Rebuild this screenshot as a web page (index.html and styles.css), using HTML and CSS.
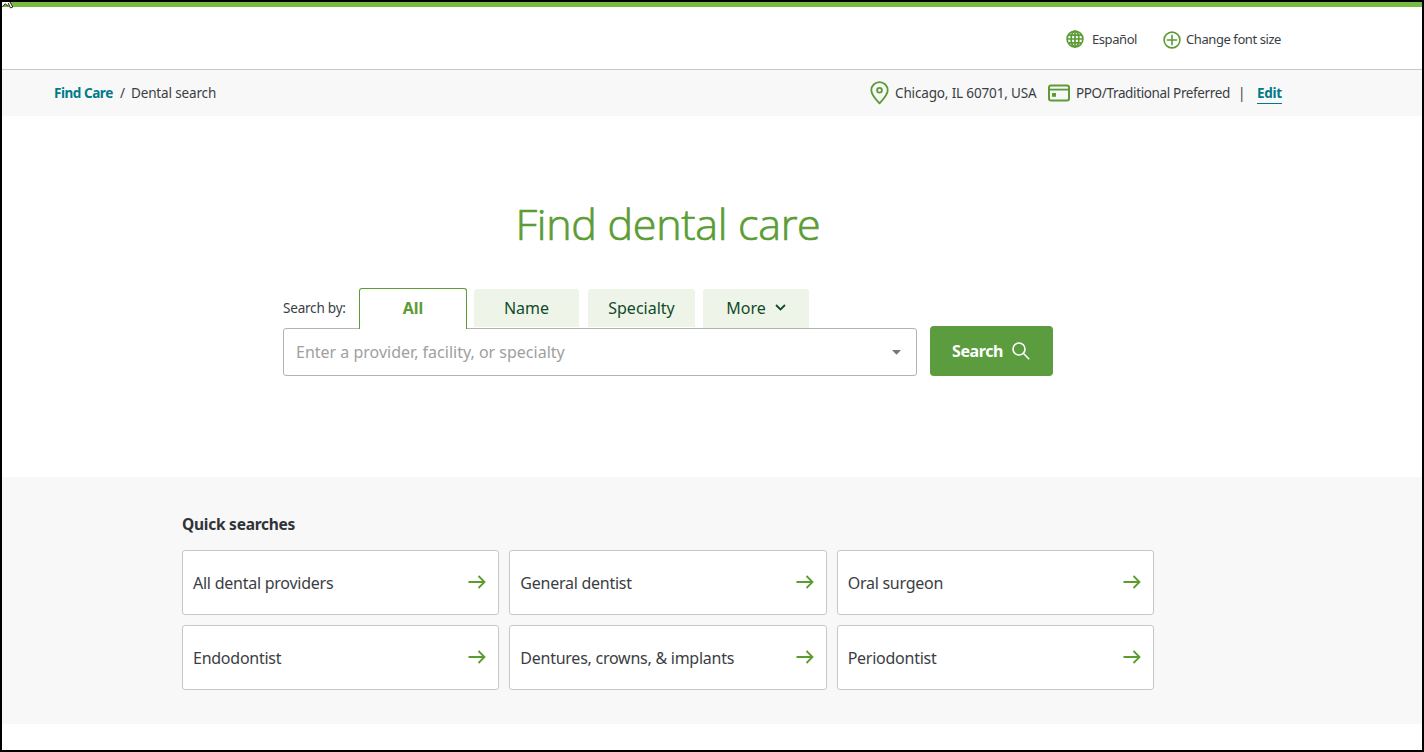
FILE: index.html
```html
<!DOCTYPE html>
<html lang="en">
<head>
<meta charset="utf-8">
<title>Find dental care</title>
<link rel="stylesheet" href="styles.css">
</head>
<body>
<div class="page">
  <svg class="cursor" width="12" height="7" viewBox="0 0 12 7"><path d="M0 0H7.5L11 5 8.5 6.5 6.3 2.5 4.5 3 3 1.5 0 4.5Z" fill="#fff"/><path d="M0.5 4.5 3.5 1.8 6 4.5M6.2 1 8.5 6 10.8 5 8 0" fill="none" stroke="#222" stroke-width="1"/></svg>
  <header class="topbar">
    <div class="container utilities">
      <a class="utility language">
        <svg width="18" height="18" viewBox="0 0 18 18" fill="none" stroke="#5b9c35" stroke-width="1.7"><circle cx="9" cy="9" r="7.9"/><path d="M9 1v16M1 9h16M2.5 5.2h13M2.5 12.8h13"/><ellipse cx="9" cy="9" rx="3.9" ry="7.8"/></svg>
        <span>Español</span>
      </a>
      <a class="utility fontsize">
        <svg width="18" height="18" viewBox="0 0 18 18" fill="none" stroke="#5b9c35" stroke-width="1.6"><circle cx="9" cy="9" r="7.9"/><path d="M9 4.3v9.4M4.3 9h9.4" stroke-linecap="round"/></svg>
        <span>Change font size</span>
      </a>
    </div>
  </header>
  <div class="contextbar">
    <div class="container context">
      <nav class="crumbs"><a class="home">Find Care</a><span class="slash">/</span><span class="current">Dental search</span></nav>
      <div class="plan">
        <svg width="19" height="24" viewBox="0 0 19 24" fill="none" stroke="#5b9c35" stroke-width="1.8"><path d="M9.5 22.3C8 20.5 1.3 14.5 1.3 9.3A8.2 8.2 0 0 1 17.7 9.3C17.7 14.5 11 20.5 9.5 22.3Z" stroke-linejoin="round"/><circle cx="9.5" cy="9.3" r="2.4"/></svg>
        <span class="place">Chicago, IL 60701, USA</span>
        <svg width="22" height="18" viewBox="0 0 22 18"><rect x="1" y="1.4" width="20" height="15" rx="2" fill="none" stroke="#5b9c35" stroke-width="2"/><path d="M1 5.6h20" stroke="#5b9c35" stroke-width="1.8"/><rect x="4" y="9" width="4" height="3.8" fill="#5b9c35"/></svg>
        <span class="network">PPO/Traditional Preferred</span>
        <span class="pipe">|</span>
        <a class="edit">Edit</a>
      </div>
    </div>
  </div>
  <main>
    <section class="hero">
      <h1>Find dental care</h1>
      <form class="search">
        <div class="field">
          <div class="tabs">
            <span class="label">Search by:</span>
            <span class="tab active">All</span>
            <span class="tab name">Name</span>
            <span class="tab specialty">Specialty</span>
            <span class="tab more">More <svg width="11" height="7" viewBox="0 0 11 7"><path d="M1 1l4.5 4.4L10 1" fill="none" stroke="#0f4a2c" stroke-width="1.8"/></svg></span>
          </div>
          <div class="input"><span>Enter a provider, facility, or specialty</span><svg width="9" height="5" viewBox="0 0 9 5"><path d="M0 0h9L4.5 4.8z" fill="#777"/></svg></div>
        </div>
        <div class="submit"><span>Search</span><svg width="18" height="18" viewBox="0 0 18 18" fill="none" stroke="#fff" stroke-width="1.6"><circle cx="7" cy="7" r="6"/><path d="M11.3 11.3l5.9 5.9"/></svg></div>
      </form>
    </section>
    <section class="quick">
      <div class="quick-inner">
        <h2>Quick searches</h2>
        <div class="cards">
          <a class="card"><span>All dental providers</span><svg class="arrow" viewBox="0 0 18 14"><path d="M0.5 7h16M10.5 1l6 6-6 6"/></svg></a>
          <a class="card"><span>General dentist</span><svg class="arrow" viewBox="0 0 18 14"><path d="M0.5 7h16M10.5 1l6 6-6 6"/></svg></a>
          <a class="card"><span>Oral surgeon</span><svg class="arrow" viewBox="0 0 18 14"><path d="M0.5 7h16M10.5 1l6 6-6 6"/></svg></a>
          <a class="card"><span>Endodontist</span><svg class="arrow" viewBox="0 0 18 14"><path d="M0.5 7h16M10.5 1l6 6-6 6"/></svg></a>
          <a class="card"><span>Dentures, crowns, &amp; implants</span><svg class="arrow" viewBox="0 0 18 14"><path d="M0.5 7h16M10.5 1l6 6-6 6"/></svg></a>
          <a class="card"><span>Periodontist</span><svg class="arrow" viewBox="0 0 18 14"><path d="M0.5 7h16M10.5 1l6 6-6 6"/></svg></a>
        </div>
      </div>
    </section>
  </main>
</div>
</body>
</html>
```
FILE: styles.css
```css
* { box-sizing: border-box; }
body { margin: 0; font-family: "Noto Sans", "Open Sans", sans-serif; font-size: 16px; color: #3a3e44; background: #fff; }
svg { display: block; flex: none; }
span, a { white-space: nowrap; }
.page { position: relative; height: 752px; border: 2px solid #000; overflow: hidden; background: #fff; }
.cursor { position: absolute; left: 0; top: 0; }
.container { width: 1228px; margin-left: 52px; }
.topbar { height: 68px; border-top: 5px solid #78bb43; border-bottom: 1px solid #c8c8c8; }
.utilities { display: flex; justify-content: flex-end; height: 62px; align-items: center; font-size: 13px; letter-spacing: -0.42px; padding-top: 2px; }
.utility { display: flex; align-items: center; gap: 8px; }
.language { width: 97px; }
.fontsize { width: 119px; gap: 5px; }
.utility svg { margin-top: -1px; }
.fontsize svg { margin-top: 1px; }
.contextbar { height: 46px; background: #f8f8f8; }
.context { display: flex; justify-content: space-between; align-items: center; height: 46px; font-size: 13.5px; letter-spacing: -0.15px; }
.crumbs { display: flex; }
.home { width: 66px; color: #007a87; font-weight: 700; letter-spacing: -0.45px; }
.slash { width: 11px; }
.plan { display: flex; align-items: center; width: 412px; }
.place { flex: none; width: 159px; padding-left: 6px; }
.network { flex: none; width: 168px; padding-left: 6px; letter-spacing: -0.36px; }
.pipe { width: 10px; }
.edit { margin-left: auto; width: 25px; color: #007a87; font-weight: 700; letter-spacing: -0.3px; border-bottom: 1px solid #007a87; line-height: 20px; }
.hero { width: 1332px; height: 361px; padding-top: 78px; }
h1 { margin: 0; height: 61px; line-height: 60px; text-align: center; font-family: "Open Sans", sans-serif; font-weight: 300; font-size: 43px; letter-spacing: -0.3px; color: #5b9c35; -webkit-text-stroke: 0.7px #5b9c35; }
.search { display: flex; align-items: flex-end; justify-content: space-between; width: 770px; margin: 33px auto 0; }
.field { width: 634px; }
.tabs { display: flex; height: 40px; align-items: flex-start; }
.label { width: 76px; font-size: 13.5px; letter-spacing: -0.2px; line-height: 41px; }
.tab { display: flex; justify-content: center; height: 38px; margin-top: 1px; line-height: 38px; background: #eef5e8; color: #0f4a2c; border-radius: 3px 3px 0 0; }
.active { position: relative; width: 108px; height: 41px; margin: 0 7px 0 0; border: 1px solid #5b9c35; border-bottom: 0; background: #fff; color: #5b9c35; font-weight: 700; }
.name { width: 105px; }
.specialty { width: 107px; margin-left: 9px; }
.more { width: 106px; height: 39px; margin-left: 8px; gap: 9px; }
.more svg { margin-top: 15px; }
.input { display: flex; align-items: center; justify-content: space-between; height: 48px; padding: 0 15px 0 12px; border: 1px solid #b3b3b3; border-radius: 3px; color: #a0a0a0; }
.submit { display: flex; align-items: center; padding-left: 22px; gap: 8px; width: 123px; height: 50px; border-radius: 4px; background: #5b9c3f; color: #fff; font-weight: 700; letter-spacing: -0.4px; }
.submit span { width: 52px; }
.quick { height: 247px; background: #f8f8f8; }
.quick-inner { width: 972px; margin-left: 180px; padding-top: 35px; }
h2 { margin: 0; height: 38px; line-height: 24px; font-size: 15.5px; letter-spacing: -0.25px; color: #303338; }
.cards { display: grid; grid-template-columns: repeat(3, 1fr); gap: 10px; }
.card { display: flex; align-items: center; justify-content: space-between; height: 65px; border: 1px solid #c7c7c7; border-radius: 3px; background: #fff; padding: 0 12px 0 10px; letter-spacing: -0.25px; }
.arrow { width: 18px; height: 14px; margin-top: -1px; fill: none; stroke: #5b9c2f; stroke-width: 1.8; }
```
